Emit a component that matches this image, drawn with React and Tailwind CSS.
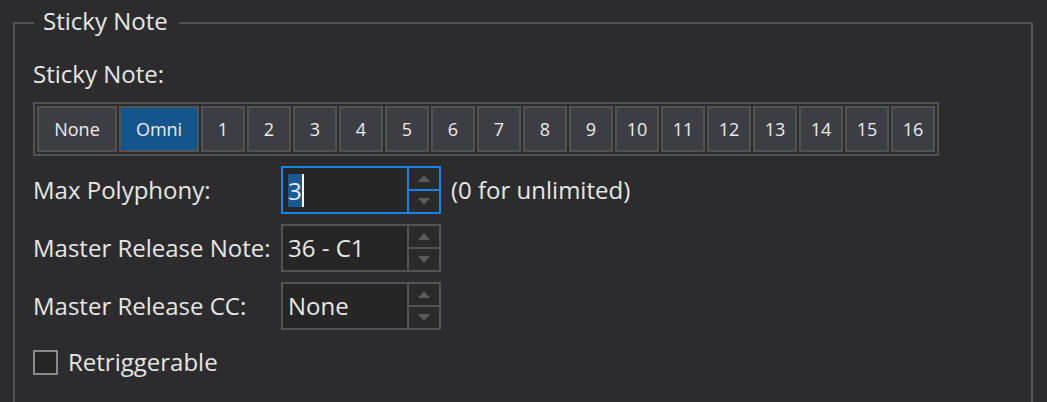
const channels = ["None", "Omni", ...Array.from({ length: 16 }, (_, i) => String(i + 1))];

const Arrow = ({ up }) => (
    <svg width="12" height="7" viewBox="0 0 12 7" className="fill-[#5a5a5a]">
        {up ? <polygon points="6,0 12,7 0,7" /> : <polygon points="0,0 12,0 6,7" />}
    </svg>
);

const SpinBox = ({ value, focused }) => {
    const border = focused ? "border-[#1683ef]" : "border-[#535353]";
    return (
        <div className={`flex w-[160px] h-[48px] border-2 ${border} bg-[#262626]`}>
            <div className="flex-1 flex items-center pl-[5px] text-[24px] text-[#e8e8e8]">
                {focused ? (
                    <span className="flex items-center">
                        <span className="bg-[#195a92] text-[#e8e8e8] leading-[33px] h-[33px]">{value}</span>
                        <span className="w-[2px] h-[33px] bg-white" />
                    </span>
                ) : (
                    value
                )}
            </div>
            <div className={`w-[32px] flex flex-col border-l-2 ${border}`}>
                <div className={`flex-1 flex items-center justify-center border-b-2 ${border} bg-[#2a2a2a]`}>
                    <Arrow up />
                </div>
                <div className="flex-1 flex items-center justify-center bg-[#2a2a2a]">
                    <Arrow />
                </div>
            </div>
        </div>
    );
};

const App = () => {
    return (
        <div className="w-[1047px] h-[402px] overflow-hidden bg-[#2c2c2e] text-[#e6e6e6] font-['Open_Sans',sans-serif] pl-[13px] pt-[7px]">
            <fieldset className="w-[1020px] h-[440px] border-2 border-[#535353] pl-[18px] pr-4 m-0">
                {/* Group title */}
                <legend className="ml-px pl-[9px] pr-[11px] text-[24px] leading-[28px] pb-[4px] text-[#e8e8e8]">Sticky Note</legend>

                <div className="text-[24px] leading-[32px] mt-[19px]">Sticky Note:</div>

                {/* Channel strip */}
                <div className="inline-flex gap-[2px] mt-[12px] border-2 border-[#535353] p-[2px]">
                    {channels.map((c) => (
                        <div
                            key={c}
                            className={`h-[46px] ${c.length > 2 ? "w-[80px]" : "w-[44px]"} flex items-center justify-center border-2 border-[#535353] text-[18px] text-[#ececec] ${c === "Omni" ? "bg-[#14558b]" : "bg-[#3d3e43]"}`}
                        >
                            {c}
                        </div>
                    ))}
                </div>

                {/* Spin box rows */}
                <div className="flex flex-col gap-[10px] mt-[10px]">
                    <div className="flex items-center">
                        <div className="w-[248px] text-[24px]">Max Polyphony:</div>
                        <SpinBox value="3" focused />
                        <div className="ml-[10px] text-[24px]">(0 for unlimited)</div>
                    </div>
                    <div className="flex items-center">
                        <div className="w-[248px] text-[24px]">Master Release Note:</div>
                        <SpinBox value="36 - C1" />
                    </div>
                    <div className="flex items-center">
                        <div className="w-[248px] text-[24px]">Master Release CC:</div>
                        <SpinBox value="None" />
                    </div>
                </div>

                {/* Checkbox */}
                <label className="flex items-center mt-[14px] gap-[10px] text-[24px]">
                    <span className="w-[25px] h-[25px] border-2 border-[#8a8a8a] bg-[#252525]" />
                    Retriggerable
                </label>
            </fieldset>
        </div>
    );
};

export default App;
